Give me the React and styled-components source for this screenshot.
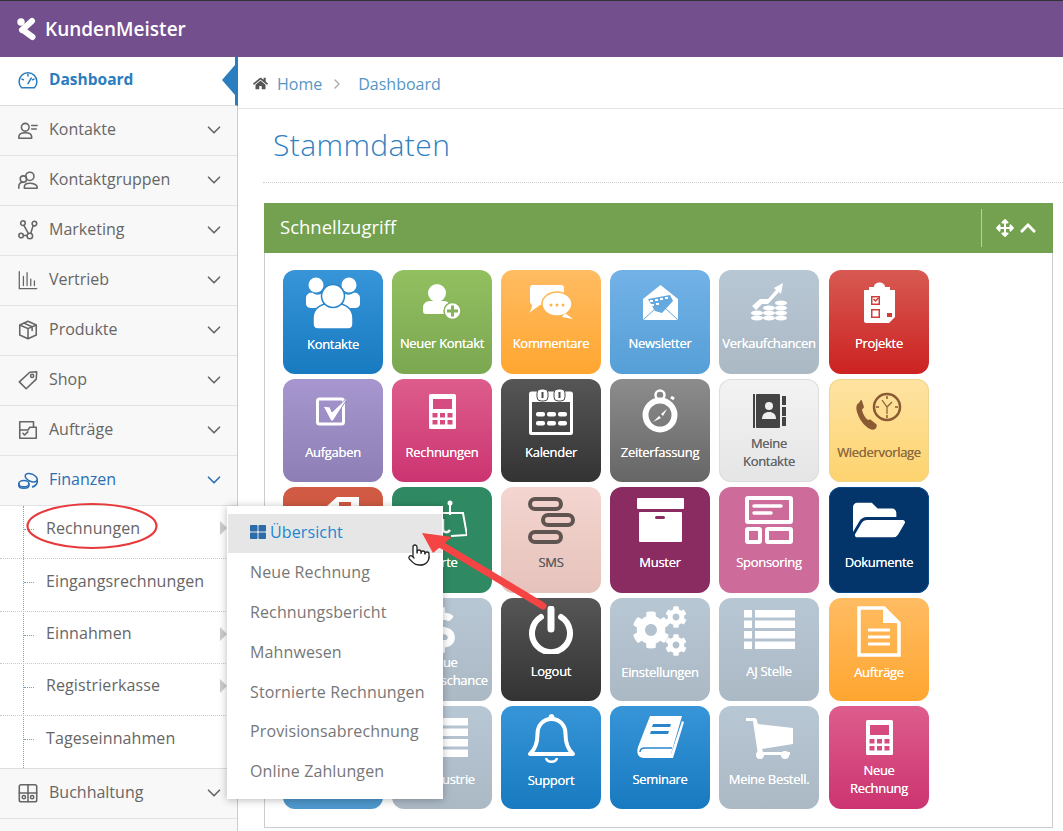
import React from "react";
import styled, { createGlobalStyle } from "styled-components";
import { ChevronDown, ChevronRight, Pointer } from "lucide-react";
import { FaHome, FaArrowsAlt, FaChevronUp, FaDollarSign, FaCog, FaThLarge, FaFolderOpen } from "react-icons/fa";

const Global = createGlobalStyle`
  html, body { margin: 0; padding: 0; background: #fff; }
  body { font-family: "Open Sans", "Liberation Sans", sans-serif; overflow: hidden; }
  * { box-sizing: border-box; }
`;

const Page = styled.div`
  position: relative;
  width: 1063px;
  height: 831px;
  overflow: hidden;
  background: #fff;
`;

const TopBar = styled.header`
  height: 57px;
  display: flex;
  align-items: center;
  gap: 8px;
  padding-left: 17px;
  background: #744f8e;
  border-top: 1px solid #333;
`;

const BrandName = styled.span`
  color: #fff;
  font-size: 19px;
  font-weight: 600;
`;

const Layout = styled.div`
  display: flex;
  height: 774px;
`;

const Sidebar = styled.nav`
  width: 238px;
  flex-shrink: 0;
  display: flex;
  flex-direction: column;
  background: #f8f8f8;
  border-right: 1px solid #ccc;
`;

const NavItem = styled.div`
  position: relative;
  height: 50px;
  flex-shrink: 0;
  display: flex;
  align-items: center;
  gap: 10px;
  padding: 0 12px 2px 17px;
  border-bottom: 1px solid #e4e4e4;
  color: ${(p) => (p.$open ? "#2a6eb4" : "#666")};
  font-size: 16px;
`;

const DashboardItem = styled(NavItem)`
  height: 49px;
  margin-right: -1px;
  background: #fff;
  color: #2a7dbf;
  font-weight: 700;
  font-size: 15.5px;
  border-bottom: 1px solid #ddd;
  border-right: 3px solid #2a7dbf;
  &::after {
    content: "";
    position: absolute;
    right: 0;
    top: 8px;
    border-style: solid;
    border-width: 15px 13px 15px 0;
    border-color: transparent #2a7dbf transparent transparent;
  }
`;

const NavLabel = styled.span`
  flex: 1;
  padding-bottom: 2px;
`;

const SubMenu = styled.div`
  position: relative;
  margin-right: -1px;
  background: #fff;
  border-bottom: 1px solid #ddd;
  flex-shrink: 0;
  &::before {
    content: "";
    position: absolute;
    left: 23px;
    top: 0;
    bottom: 0;
    border-left: 1px dotted #6aa6d0;
  }
`;

const SubItem = styled.div`
  position: relative;
  height: ${(p) => p.$h}px;
  display: flex;
  align-items: center;
  padding: 0 0 9px 46px;
  font-size: 16px;
  letter-spacing: 0.1px;
  color: #666;
  border-bottom: ${(p) => (p.$last ? "none" : "1px dotted #c8c8c8")};
  &::before {
    content: "";
    position: absolute;
    left: 24px;
    top: 23px;
    width: 10px;
    border-top: 1px dotted #6aa6d0;
  }
  ${(p) =>
    p.$more &&
    `&::after {
      content: "";
      position: absolute;
      left: 220px;
      top: 15px;
      border-style: solid;
      border-width: 7px 0 7px 7px;
      border-color: transparent transparent transparent #ccc;
    }`}
`;

const Main = styled.main`
  flex: 1;
  min-width: 0;
`;

const Crumbs = styled.div`
  height: 52px;
  display: flex;
  align-items: center;
  padding: 2px 0 0 15px;
  border-bottom: 1px solid #e4e4e4;
  font-size: 16px;
  color: #5596c6;
`;

const CrumbLink = styled.span`
  margin-left: ${(p) => p.$gap || 0}px;
`;

const Heading = styled.h1`
  margin: 0 0 0 25px;
  height: 74px;
  padding: 16px 0 0 10px;
  font-size: 30px;
  line-height: 40px;
  font-weight: 300;
  color: #2f7fc1;
  letter-spacing: 0.4px;
  border-bottom: 1px dotted #ccc;
`;

const Panel = styled.section`
  margin: 20px 10px 0 26px;
  height: 625px;
  border: 1px solid #ccc;
  border-top: none;
`;

const PanelHead = styled.div`
  height: 50px;
  margin: 0 -1px;
  display: flex;
  align-items: center;
  padding-left: 16px;
  background: #73a14f;
  color: #fff;
  font-size: 18.5px;
  font-weight: 500;
`;

const PanelTitle = styled.span`
  flex: 1;
  padding-bottom: 4px;
`;

const PanelTools = styled.div`
  width: 72px;
  height: 38px;
  display: flex;
  align-items: center;
  gap: 5px;
  padding-left: 14px;
  border-left: 1px solid #b7d0a3;
`;

const TileGrid = styled.div`
  display: grid;
  grid-template-columns: repeat(4, 109px) 110px 100px;
  grid-template-rows: 104px 103px 106px 103px 103px;
  row-gap: 5px;
  padding: 17px 0 0 18px;
`;

const TileBox = styled.div`
  width: 100px;
  border-radius: 12px;
  display: flex;
  flex-direction: column;
  justify-content: space-between;
  align-items: center;
  padding: 8px 0 12px;
  background: linear-gradient(${(p) => p.$from}, ${(p) => p.$to});
  color: ${(p) => p.$ink || "#fff"};
  box-shadow: ${(p) => (p.$edge ? `inset 0 0 0 1px ${p.$edge}` : "none")};
`;

const TileIcon = styled.div`
  height: 50px;
  display: flex;
  align-items: center;
  justify-content: center;
`;

const TileLabel = styled.div`
  height: 36px;
  display: flex;
  align-items: center;
  padding-bottom: ${(p) => (p.$single ? 2 : 0)}px;
  text-align: center;
  white-space: pre;
  font-size: 13px;
  line-height: 18px;
  letter-spacing: -0.3px;
  text-shadow: 0 0 0.6px currentColor;
`;

const Flyout = styled.div`
  position: absolute;
  left: 227px;
  top: 506px;
  width: 216px;
  height: 293px;
  padding: 8px 1px 0;
  background: #fff;
  box-shadow: 0 1px 8px rgba(0, 0, 0, 0.28);
  z-index: 5;
`;

const FlyoutItem = styled.div`
  height: 39.8px;
  display: flex;
  align-items: center;
  gap: 4px;
  padding: 0 0 ${(p) => (p.$active ? 2 : 3)}px 22px;
  font-size: 16px;
  letter-spacing: 0.12px;
  white-space: nowrap;
  color: ${(p) => (p.$active ? "#1a87d0" : "#777")};
  background: ${(p) => (p.$active ? "#e6e6e6" : "transparent")};
  border-bottom: ${(p) => (p.$active ? "1px solid #fff" : "none")};
`;

const Annotation = styled.svg`
  position: absolute;
  left: 0;
  top: 0;
  z-index: 6;
  pointer-events: none;
`;

const CursorMark = styled.div`
  position: absolute;
  left: 407px;
  top: 543px;
  z-index: 7;
  line-height: 0;
`;

const Ico = ({ children, s = 22 }) => (
  <svg width={s} height={s} viewBox="0 0 24 24" fill="none" stroke="currentColor" strokeWidth="1.7" strokeLinecap="round" strokeLinejoin="round" style={{ flexShrink: 0 }}>
    {children}
  </svg>
);

const navIcons = {
  dashboard: (
    <Ico>
      <path d="M5 20.5a9.7 9.7 0 1 1 14 0z" />
      <path d="M12 16l3.5-6M5.5 11l1.5.7M12 6v1.5M18.5 11l-1.5.7" />
    </Ico>
  ),
  kontakte: (
    <Ico>
      <circle cx="9" cy="9" r="4.2" />
      <path d="M2 21v-1.5C2 16 5 15 9 15s7 1 7 4.5V21zM16 7h6M16 11h5" />
    </Ico>
  ),
  gruppen: (
    <Ico>
      <circle cx="14" cy="8" r="4.5" />
      <circle cx="7" cy="11" r="3.5" />
      <path d="M2 21v-2c0-3 2-4.5 5-4.5M8 21v-1.5c0-2.5 2.5-4 6-4s8 1.5 8 4V21z" />
    </Ico>
  ),
  marketing: (
    <Ico>
      <circle cx="6.5" cy="4.5" r="2.5" />
      <circle cx="19" cy="5" r="2.5" />
      <circle cx="4.5" cy="18" r="2.5" />
      <circle cx="14" cy="18.5" r="3" />
      <path d="M7.5 7l5 9M17.5 7.5L15 15.5M7 18h4" />
    </Ico>
  ),
  vertrieb: (
    <Ico>
      <path d="M2.5 3v18.5h19M7 18V8M11 18V4M15 18v-7M19 18v-5" strokeWidth="1.4" />
    </Ico>
  ),
  produkte: (
    <Ico>
      <path d="M12 2.5l9 4v11l-9 4-9-4v-11zM3 6.5l9 4 9-4M12 10.5v11M7.5 4.5l9 4v4" />
    </Ico>
  ),
  shop: (
    <Ico>
      <path d="M2.5 14L14 3.5l7.5-.5-.5 8L10 21.5z" />
      <circle cx="16.5" cy="7.5" r="1.7" />
    </Ico>
  ),
  auftraege: (
    <Ico>
      <path d="M3 9V3h15v6M3 9v12h18V9h-7l-2 3H3M6.5 15.5l1.8 2 3.5-3.5" />
    </Ico>
  ),
  finanzen: (
    <Ico>
      <ellipse cx="15.5" cy="9.5" rx="7" ry="4" transform="rotate(25 15.5 9.5)" />
      <path d="M22 12.5c1 2-1 6-5 7" />
      <ellipse cx="7.5" cy="16" rx="5.5" ry="3.5" />
      <path d="M2 16v2c0 2 2.5 3 5.5 3s5.5-1 5.5-3v-2" />
    </Ico>
  ),
  buchhaltung: (
    <Ico>
      <rect x="2.5" y="3" width="19" height="18.5" rx="2" />
      <path d="M12 3v18.5M2.5 12h19" />
      <circle cx="7.5" cy="16.5" r="1.8" />
      <circle cx="16.5" cy="16.5" r="1.8" />
    </Ico>
  ),
};

const KundenLogo = () => (
  <svg width="20" height="24" viewBox="0 0 20 24" fill="#fff">
    <circle cx="4" cy="5" r="3.7" />
    <path d="M5 13L15 4M6 13L15.5 20" stroke="#fff" strokeWidth="6" strokeLinecap="round" fill="none" />
  </svg>
);

const IconKontakte = ({ c }) => (
  <svg width="56" height="52" viewBox="0 0 56 52" fill="#fff">
    <circle cx="11" cy="8" r="7.5" />
    <circle cx="44" cy="8" r="7.5" />
    <path d="M1 21c0-4 4-6 7-5 2 2 5 2 8 1l3 14H6c-3 0-5-2-5-4z" />
    <path d="M55 21c0-4-4-6-7-5-2 2-5 2-8 1l-3 14h13c3 0 5-2 5-4z" />
    <path d="M8 41c0-9 7-15 20-15s20 6 20 15v6c0 3-2 5-5 5H13c-3 0-5-2-5-5z" stroke={c} strokeWidth="1.5" />
    <circle cx="28" cy="19" r="11.5" stroke={c} strokeWidth="1.5" />
  </svg>
);

const IconNeuerKontakt = ({ c }) => (
  <svg width="40" height="36" viewBox="0 0 40 36" fill="#fff">
    <circle cx="15" cy="9" r="9" />
    <path d="M1 23c0-3 3-6 7-6h14c4 0 6 3 6 6v7H4c-2 0-3-1-3-3z" />
    <circle cx="30.5" cy="27" r="8.5" stroke={c} strokeWidth="1.5" />
    <path d="M29 21.5h3v4h4v3h-4v4h-3v-4h-4v-3h4z" fill={c} />
  </svg>
);

const IconKommentare = ({ c }) => (
  <svg width="44" height="34" viewBox="0 0 44 34" fill="#fff">
    <path d="M4 0h28c2 0 3 1 3 3v14c0 2-1 3-3 3H11l-11 8c2-3 3-5 3-8-1-1-2-2-2-3V3c0-2 1-3 3-3z" />
    <ellipse cx="28" cy="19" rx="15" ry="12" stroke={c} strokeWidth="1.5" />
    <path d="M36 28l8 6-11-2z" />
    <circle cx="22" cy="20" r="1.5" fill={c} />
    <circle cx="28" cy="20" r="1.5" fill={c} />
    <circle cx="34" cy="20" r="1.5" fill={c} />
  </svg>
);

const IconNewsletter = ({ c }) => (
  <svg width="37" height="35" viewBox="0 0 37 35" fill="#fff">
    <path d="M1 14L18.5 0 36 14v19c0 1-1 2-2 2H3c-1 0-2-1-2-2z" />
    <path d="M6 14l22-4 3 6-11 12-7-2z" fill={c} />
    <path d="M8 15h3v2H8zM13 14h3v2h-3zM18 13h3v2h-3zM23 12h3v2h-3zM9 19h3v2H9zM14 18h3v2h-3z" />
    <path d="M2 34l12-11M35 34L23 23" stroke={c} strokeWidth="1" fill="none" />
  </svg>
);

const IconVerkauf = () => (
  <svg width="36" height="38" viewBox="0 0 36 38" fill="#fff">
    <path d="M1 23l8-7h8l8-9-2-2 9-5-2 11-2-2-11 12H11l-6 6z" />
    <ellipse cx="6" cy="30" rx="6" ry="2.5" />
    <ellipse cx="6" cy="35" rx="6" ry="2.5" />
    <ellipse cx="18" cy="25" rx="6" ry="2.5" />
    <ellipse cx="18" cy="30" rx="6" ry="2.5" />
    <ellipse cx="18" cy="35" rx="6" ry="2.5" />
    <ellipse cx="30" cy="20" rx="6" ry="2.5" />
    <ellipse cx="30" cy="25" rx="6" ry="2.5" />
    <ellipse cx="30" cy="30" rx="6" ry="2.5" />
    <ellipse cx="30" cy="35" rx="6" ry="2.5" />
  </svg>
);

const IconProjekte = ({ c }) => (
  <svg width="31" height="41" viewBox="0 0 31 41" fill="#fff">
    <path d="M10 5c0-6 11-6 11 0h5v3h5v27l-6 6H2c-1 0-2-1-2-2V8h5V5z" />
    <rect x="7" y="14" width="9" height="9" fill={c} />
    <rect x="8.5" y="15.5" width="6" height="6" fill="#fff" />
    <path d="M9.5 17l2 2 3-3" stroke={c} strokeWidth="1.5" fill="none" />
    <rect x="7" y="27" width="9" height="9" fill={c} />
    <rect x="8.5" y="28.5" width="6" height="6" fill="#fff" />
    <path d="M23 35h5v-4h-5z" fill={c} />
  </svg>
);

const IconAufgaben = ({ c }) => (
  <svg width="34" height="30" viewBox="0 0 34 30" fill="none">
    <rect x="1.5" y="3" width="26" height="25" rx="2" stroke="#fff" strokeWidth="3" />
    <path d="M7 10l7 1 2 5L33 0 17 25h-2z" fill="#fff" stroke={c} strokeWidth="1" />
  </svg>
);

const IconCalc = ({ c }) => (
  <svg width="27" height="35" viewBox="0 0 27 35" fill="#fff">
    <rect width="27" height="35" rx="1.5" />
    <rect x="4" y="5" width="19" height="10" fill={c} />
    {[0, 1, 2].map((x) =>
      [0, 1].map((y) => <rect key={`${x}${y}`} x={3.5 + x * 7.5} y={19 + y * 7} width="5" height="4.5" fill={c} />)
    )}
  </svg>
);

const IconKalender = ({ c }) => (
  <svg width="44" height="47" viewBox="0 0 44 47" fill="none">
    <rect x="1.5" y="5" width="41" height="40.5" rx="1" stroke="#fff" strokeWidth="3" />
    <path d="M1 14h42V5H1z" fill="#fff" />
    <rect x="8" y="1" width="11" height="12" rx="4" fill="#fff" stroke={c} strokeWidth="1" />
    <rect x="25" y="1" width="11" height="12" rx="4" fill="#fff" stroke={c} strokeWidth="1" />
    <path d="M13.5 4v6M30.5 4v6" stroke={c} strokeWidth="2" />
    {[0, 1, 2].map((x) =>
      [0, 1].map((y) => <rect key={`${x}${y}`} x={7 + x * 11} y={24 + y * 9} width="9" height="4.5" rx="2" fill="#fff" />)
    )}
  </svg>
);

const IconStopwatch = () => (
  <svg width="36" height="44" viewBox="0 0 36 44" fill="none">
    <circle cx="18" cy="6" r="4.5" stroke="#fff" strokeWidth="2.5" />
    <path d="M29 8l3 2" stroke="#fff" strokeWidth="3" />
    <circle cx="18" cy="26" r="14.5" stroke="#fff" strokeWidth="6" />
    <path d="M11 33l6-6 2 2zM25 20l-6 5 2 2z" fill="#fff" />
  </svg>
);

const IconAdressbuch = ({ c }) => (
  <svg width="33" height="34" viewBox="0 0 33 34">
    <rect x="0" y="0" width="2" height="34" fill="#444" />
    <rect x="3" y="0" width="24" height="34" rx="1" fill="#444" />
    <rect x="29" y="2" width="4" height="9" fill="#444" />
    <rect x="29" y="13" width="4" height="9" fill="#444" />
    <rect x="29" y="23" width="4" height="9" fill="#444" />
    <circle cx="16" cy="12" r="4" fill={c} />
    <path d="M9 25c0-5 3-7 7-7s7 2 7 7z" fill={c} />
  </svg>
);

const IconWiedervorlage = () => (
  <svg width="47" height="39" viewBox="0 0 47 39" fill="none">
    <path d="M3 11c-3 1-3 5-2 9 2 7 7 14 13 17 2 1 5 1 6-1 1-2 1-3 0-4l-5-4c-1-1-2 0-3 0-3-2-5-6-6-10 0-1 2-2 2-3l-2-6c0-1-1-2-3 2z" fill="#8a5a33" />
    <circle cx="31" cy="15" r="13" stroke="#8a5a33" strokeWidth="2.5" />
    <path d="M31 4v3M31 23v3M20 15h3M39 15h3" stroke="#8a5a33" strokeWidth="1.5" />
    <path d="M26 8l5 7 5-5M31 15v7" stroke="#8a5a33" strokeWidth="1.2" />
  </svg>
);

const IconAngebot = () => (
  <svg width="36" height="24" viewBox="0 0 36 24" fill="#fff" style={{ margin: "-22px 0 0 16px" }}>
    <path d="M4 9L14 0h22v20H4z" />
    <path d="M16 5h12v15H16z" fill="#d05a43" />
  </svg>
);

const IconKarte = () => (
  <svg width="44" height="50" viewBox="0 0 44 50" fill="none" style={{ margin: "8px 0 0 6px" }}>
    <circle cx="27" cy="4" r="2.5" fill="#fff" />
    <path d="M27 6v10" stroke="#fff" strokeWidth="2" />
    <path d="M16 14h24l4 22-16 1" stroke="#fff" strokeWidth="2" />
    <path d="M20 20v10c0 4 5 4 7 1" stroke="#fff" strokeWidth="2.5" />
  </svg>
);

const IconSms = () => (
  <svg width="47" height="47" viewBox="0 0 47 47" fill="none" stroke="#5f5450" strokeWidth="4">
    <rect x="2" y="2" width="31" height="10" rx="5" />
    <rect x="15" y="18" width="30" height="10" rx="5" />
    <rect x="2" y="35" width="31" height="10" rx="5" />
  </svg>
);

const IconMuster = ({ c }) => (
  <svg width="47" height="44" viewBox="0 0 47 44" fill="#fff">
    <rect width="47" height="11" rx="1" />
    <rect x="2" y="14" width="43" height="30" rx="1" />
    <rect x="18" y="18" width="10" height="3" rx="1.5" fill={c} />
  </svg>
);

const IconSponsoring = () => (
  <svg width="48" height="48" viewBox="0 0 48 48" fill="none" stroke="#fff" strokeWidth="4">
    <rect x="2" y="2" width="44" height="24" rx="1" />
    <path d="M9 10h27M9 17h17" strokeWidth="3.5" strokeLinecap="round" />
    <rect x="2" y="33" width="13" height="13" rx="1" />
    <rect x="22" y="33" width="24" height="13" rx="1" />
  </svg>
);

const IconAuftraege = () => (
  <svg width="44" height="51" viewBox="0 0 44 51" fill="none">
    <path d="M2 2h25l15 15v32H2z" stroke="#fff" strokeWidth="3.5" />
    <path d="M26 2v15h16z" fill="#fff" />
    <path d="M11 24h22M11 31h22M11 38h22" stroke="#fff" strokeWidth="3" />
  </svg>
);

const IconListe = () => (
  <svg width="51" height="40" viewBox="0 0 51 40" fill="#fff">
    {[0, 1, 2, 3].map((i) => (
      <g key={i}>
        <rect x="0" y={i * 10.5} width="8" height="7.5" />
        <rect x="11" y={i * 10.5} width="40" height="7.5" />
      </g>
    ))}
  </svg>
);

const IconZahnraeder = () => (
  <svg width="56" height="50" viewBox="0 0 56 50">
    <g fill="#fff">
      <FaCog x="0" y="5" size="38" />
      <FaCog x="33" y="0" size="22" />
      <FaCog x="33" y="28" size="22" />
    </g>
  </svg>
);

const IconSeminare = () => (
  <svg width="47" height="44" viewBox="0 0 47 44" fill="none">
    <path d="M13 0h32l-11 38H6c-4 0-6-3-5-7z" fill="#fff" />
    <path d="M6 31c-3 0-4 2-3 4s2 3 4 3h27l11-33 2 1-11 36H7c-5 0-8-4-6-10" fill="#fff" />
    <path d="M3 36c0-3 2-4 5-4h27" stroke="#2a86cb" strokeWidth="1.5" />
    <path d="M16 8h18l-1 3H15zM14 15h18l-1 3H13z" fill="#2a86cb" />
  </svg>
);

const IconWagen = () => (
  <svg width="47" height="42" viewBox="0 0 47 42" fill="#fff">
    <path d="M0 1h8c2 0 3 1 3 3l1 3 35 4v16l-31 5 1 3h27v3H12L7 4H0z" />
    <circle cx="14" cy="38" r="4" />
    <circle cx="39" cy="38" r="4" />
  </svg>
);

const IconGlocke = () => (
  <svg width="47" height="52" viewBox="0 0 47 52" fill="none" stroke="#fff">
    <circle cx="23.5" cy="4" r="2.5" fill="#fff" />
    <path d="M23.5 6c-9 0-14 7-14 15 0 9-2 15-7.5 20h43c-5.500-5-7.500-11-7.500-20 0-8-5-15-14-15z" strokeWidth="4" strokeLinejoin="round" />
    <path d="M18 45c1 5 10 5 11 0" strokeWidth="2.5" />
  </svg>
);

const IconLogout = () => (
  <svg width="44" height="48" viewBox="0 0 44 48" fill="none" stroke="#fff" strokeWidth="6" strokeLinecap="round">
    <path d="M12 11a19 19 0 1 0 20 0" />
    <path d="M22 3v20" strokeWidth="7" />
  </svg>
);

const grey = { from: "#b8c7d4", to: "#abb9c5" };
const blue = { from: "#3795d8", to: "#187ac0" };
const pink = { from: "#dd5d8c", to: "#cc3471" };
const amber = { from: "#ffbc62", to: "#ffa631" };
const dark = { from: "#565656", to: "#333" };

const tiles = [
  { label: "Kontakte", ...blue, Icon: IconKontakte, c: "#2a86cb" },
  { label: "Neuer Kontakt", from: "#92c060", to: "#7ba751", Icon: IconNeuerKontakt, c: "#86b259" },
  { label: "Kommentare", ...amber, Icon: IconKommentare, c: "#ffb34c" },
  { label: "Newsletter", from: "#72b2e7", to: "#569fd7", Icon: IconNewsletter, c: "#65a9df" },
  { label: "Verkaufchancen", ...grey, Icon: IconVerkauf },
  { label: "Projekte", from: "#d75a52", to: "#cc2222", Icon: IconProjekte, c: "#d03c38" },
  { label: "Aufgaben", from: "#a796cf", to: "#8d7fb6", Icon: IconAufgaben, c: "#9c8cc5" },
  { label: "Rechnungen", ...pink, Icon: IconCalc, c: "#d64c80" },
  { label: "Kalender", ...dark, Icon: IconKalender, c: "#4a4a4a" },
  { label: "Zeiterfassung", from: "#8c8c8c", to: "#666", Icon: IconStopwatch },
  { label: "Meine\nKontakte", from: "#f3f3f3", to: "#e5e5e5", edge: "#ddd", ink: "#666", Icon: IconAdressbuch, c: "#eee" },
  { label: "Wiedervorlage", from: "#fee3a2", to: "#fdd36f", edge: "#f0d48a", ink: "#8d6a3f", Icon: IconWiedervorlage },
  { label: "", from: "#d05a43", to: "#d05a43", Icon: IconAngebot },
  { label: "Karte", from: "#2f8a63", to: "#2f8a63", Icon: IconKarte },
  { label: "SMS", from: "#f4d5cf", to: "#e6c2bc", ink: "#5f5f5f", Icon: IconSms },
  { label: "Muster", from: "#8a2b62", to: "#8a2b62", Icon: IconMuster, c: "#8a2b62" },
  { label: "Sponsoring", from: "#cd6b9b", to: "#cd6b9b", Icon: IconSponsoring },
  { label: "Dokumente", from: "#03346a", to: "#03346a", edge: "#0a4a8a", icon: <FaFolderOpen size={52} color="#fff" /> },
  { label: "", ...grey },
  { label: "Neue\nVerkaufschance", ...grey, icon: <FaDollarSign size={46} color="#fff" /> },
  { label: "Logout", ...dark, Icon: IconLogout },
  { label: "Einstellungen", ...grey, Icon: IconZahnraeder },
  { label: "AJ Stelle", ...grey, Icon: IconListe },
  { label: "Aufträge", ...amber, Icon: IconAuftraege },
  { label: "", from: "#4f98cd", to: "#4f98cd" },
  { label: "AJ Industrie", ...grey, Icon: IconListe },
  { label: "Support", ...blue, Icon: IconGlocke },
  { label: "Seminare", ...blue, Icon: IconSeminare },
  { label: "Meine Bestell.", ...grey, Icon: IconWagen },
  { label: "Neue\nRechnung", ...pink, Icon: IconCalc, c: "#d64c80" },
];

const navTop = [
  ["kontakte", "Kontakte"],
  ["gruppen", "Kontaktgruppen"],
  ["marketing", "Marketing"],
  ["vertrieb", "Vertrieb"],
  ["produkte", "Produkte"],
  ["shop", "Shop"],
  ["auftraege", "Aufträge"],
];

const subItems = [
  ["Rechnungen", true, 53],
  ["Eingangsrechnungen", false, 53],
  ["Einnahmen", true, 52],
  ["Registrierkasse", true, 52],
  ["Tageseinnahmen", false, 52],
];

const flyoutItems = ["Neue Rechnung", "Rechnungsbericht", "Mahnwesen", "Stornierte Rechnungen", "Provisionsabrechnung", "Online Zahlungen"];

const App = () => (
  <Page>
    <Global />
    <TopBar>
      <KundenLogo />
      <BrandName>KundenMeister</BrandName>
    </TopBar>
    <Layout>
      <Sidebar>
        <DashboardItem>
          {navIcons.dashboard}
          <NavLabel>Dashboard</NavLabel>
        </DashboardItem>
        {navTop.map(([key, label]) => (
          <NavItem key={key}>
            {navIcons[key]}
            <NavLabel>{label}</NavLabel>
            <ChevronDown size={22} strokeWidth={1.8} />
          </NavItem>
        ))}
        <NavItem $open>
          {navIcons.finanzen}
          <NavLabel>Finanzen</NavLabel>
          <ChevronDown size={22} strokeWidth={1.8} />
        </NavItem>
        <SubMenu>
          {subItems.map(([label, more, h], i) => (
            <SubItem key={label} $more={more} $h={h} $last={i === subItems.length - 1}>
              {label}
            </SubItem>
          ))}
        </SubMenu>
        <NavItem>
          {navIcons.buchhaltung}
          <NavLabel>Buchhaltung</NavLabel>
          <ChevronDown size={22} strokeWidth={1.8} />
        </NavItem>
      </Sidebar>
      <Main>
        <Crumbs>
          <FaHome size={15} color="#555" />
          <CrumbLink $gap={9}>Home</CrumbLink>
          <ChevronRight size={16} color="#aaa" style={{ marginLeft: 7 }} />
          <CrumbLink $gap={13}>Dashboard</CrumbLink>
        </Crumbs>
        <Heading>Stammdaten</Heading>
        <Panel>
          <PanelHead>
            <PanelTitle>Schnellzugriff</PanelTitle>
            <PanelTools>
              <FaArrowsAlt size={18} color="#fff" />
              <FaChevronUp size={18} color="#fff" />
            </PanelTools>
          </PanelHead>
          <TileGrid>
            {tiles.map((t, i) => (
              <TileBox key={i} $from={t.from} $to={t.to} $ink={t.ink} $edge={t.edge}>
                <TileIcon>{t.Icon ? <t.Icon c={t.c} /> : t.icon}</TileIcon>
                <TileLabel $single={!t.label.includes("\n")}>{t.label}</TileLabel>
              </TileBox>
            ))}
          </TileGrid>
        </Panel>
      </Main>
    </Layout>
    <Flyout>
      <FlyoutItem $active>
        <FaThLarge size={16} color="#2d6ca8" />
        Übersicht
      </FlyoutItem>
      {flyoutItems.map((label) => (
        <FlyoutItem key={label}>{label}</FlyoutItem>
      ))}
    </Flyout>
    <Annotation width="1063" height="831" viewBox="0 0 1063 831">
      <ellipse cx="92" cy="526" rx="64.5" ry="22" fill="none" stroke="#e63a3d" strokeWidth="2.2" />
      <path d="M543 606L440 544" stroke="#f44444" strokeWidth="7" strokeLinecap="round" />
      <path d="M422 533L452 537L433 553z" fill="#f44444" />
    </Annotation>
    <CursorMark>
      <Pointer size={24} fill="#fff" color="#222" strokeWidth={1.3} />
    </CursorMark>
  </Page>
);

export default App;
